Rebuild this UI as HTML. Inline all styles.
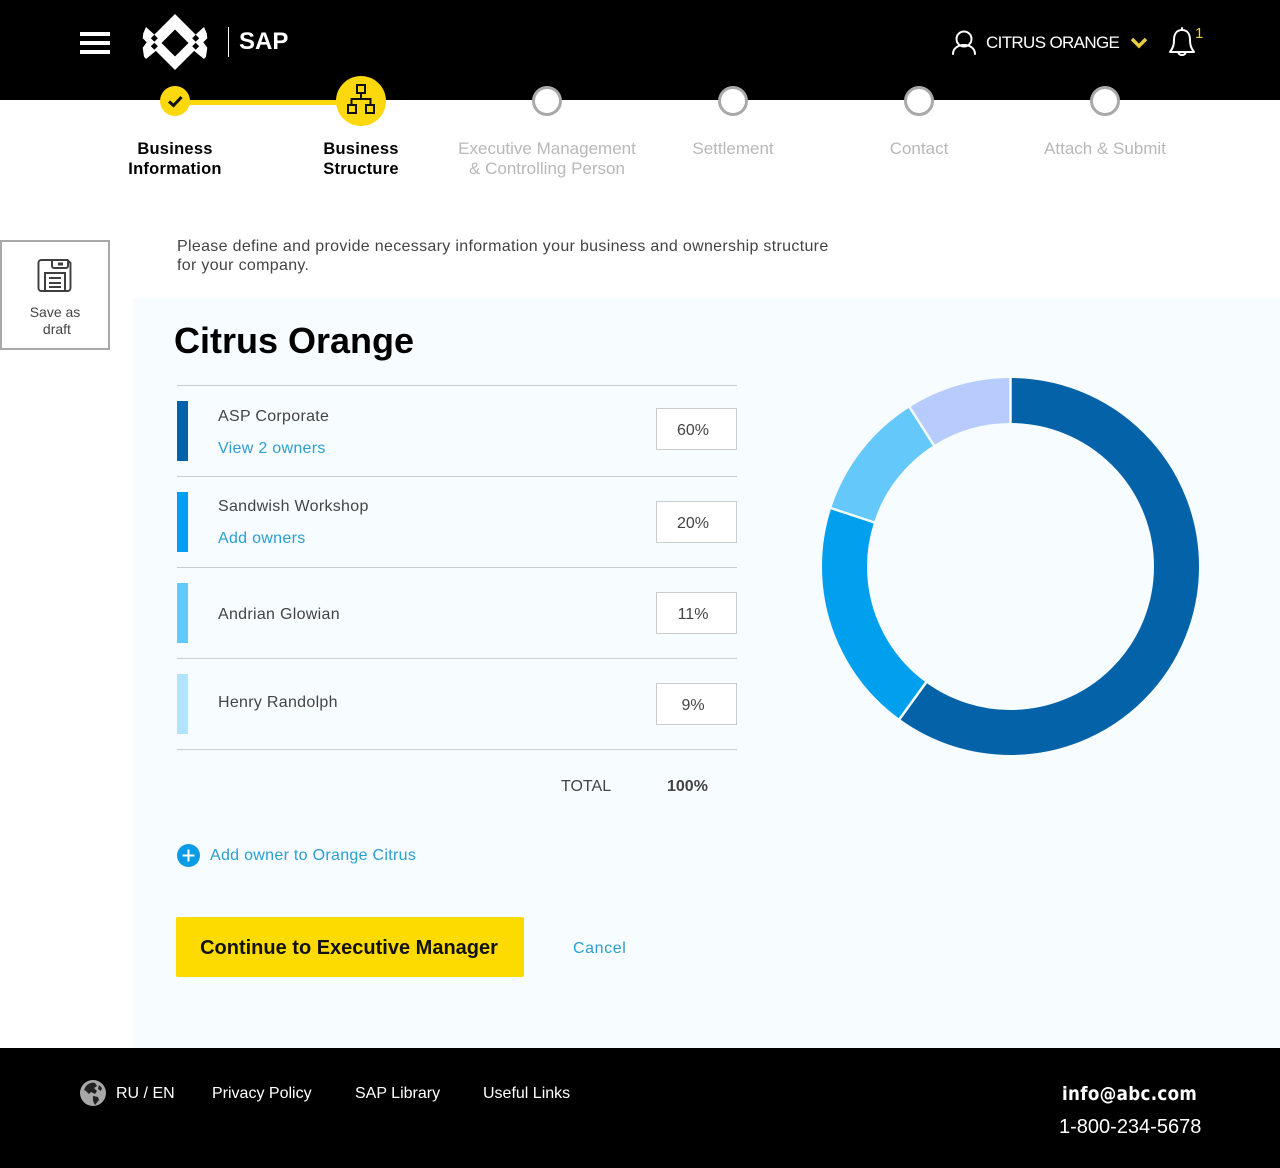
<!DOCTYPE html>
<html><head><meta charset="utf-8"><style>
html,body{margin:0;padding:0;background:#fff}
#p{position:relative;width:1280px;height:1168px;overflow:hidden;font-family:"Liberation Sans",sans-serif;background:#fff}
#p div,#p a,#p span.a{position:absolute;white-space:nowrap}
.c{text-align:center}
.ln{left:177px;width:560px;height:1px;background:#c9cdd0}
.bar{left:177px;width:11px;height:60px}
.nm{left:218px;font-size:16px;line-height:20px;color:#444;letter-spacing:.3px}
.lk{left:218px;font-size:16px;line-height:20px;color:#2a9fd0;letter-spacing:.3px}
.pc{left:656px;width:72px;height:40px;padding-right:7px;border:1px solid #c9cdd0;background:#fff;font-size:16px;line-height:44px;text-align:center;color:#444}
.st{font-size:17px;line-height:20px;text-align:center;width:200px;color:#b8b8b8;top:139px}
.sb{color:#000;font-weight:bold;font-size:16.5px;letter-spacing:.25px}
.dot{width:24px;height:24px;border:3px solid #a9a9a9;border-radius:50%;background:#fff;top:86px}
.f{top:1084px;font-size:16px;line-height:20px;color:#fff}
</style></head><body><div id="p">
<div style="left:0;top:0;width:1280px;height:100px;background:#000"></div>
<div style="left:80px;top:32px;width:30px;height:4px;background:#fff"></div>
<div style="left:80px;top:41px;width:30px;height:4px;background:#fff"></div>
<div style="left:80px;top:50px;width:30px;height:4px;background:#fff"></div>
<svg style="position:absolute;left:0;top:0" width="1280" height="100">
<polygon fill="#fff" points="175,14 203,42 175,70 147,42"/>
<polygon fill="#fff" points="146,27 157,37 157,50 146,59 144,56.700 142.700,47.700 146.700,42.300 142.700,38.300 143.300,33.300"/>
<polygon fill="#fff" points="204,27 193,37 193,50 204,59 206,56.700 207.300,47.700 203.300,42.300 207.300,38.300 206.700,33.300"/>
<polygon fill="#000" points="175,29.500 188.500,43 175,56.500 161.500,43"/>
<polygon fill="#000" points="154.300,34.800 157.800,38.300 154.300,41.800 150.800,38.300"/>
<polygon fill="#000" points="154.300,42.800 157.800,46.300 154.300,49.800 150.800,46.300"/>
<polygon fill="#000" points="195.700,34.800 199.200,38.300 195.700,41.800 192.200,38.300"/>
<polygon fill="#000" points="195.700,42.800 199.200,46.300 195.700,49.800 192.200,46.300"/>
<g fill="none" stroke="#fff" stroke-width="2" stroke-linecap="round" stroke-linejoin="round">
<circle cx="964" cy="39" r="7.500"/>
<path d="M953 54c0-12 22-12 22 0"/>
<path d="M1182 30c-6 0-8 5-8 10 0 5-1 8-4 12h24c-3-4-4-7-4-12 0-5-2-10-8-10z"/>
<path d="M1182 30v-2M1178 52c1 4 7 4 8 0"/>
</g>
<path d="M1132 39l7 7 7-7" fill="none" stroke="#e6ce40" stroke-width="3.500"/>
</svg>
<div style="left:228px;top:27px;width:1px;height:30px;background:#fff"></div>
<div style="left:239px;top:27px;font-size:24px;line-height:30px;font-weight:bold;color:#fff">SAP</div>
<div style="left:986px;top:33px;font-size:17px;line-height:20px;letter-spacing:-.65px;color:#fff">CITRUS ORANGE</div>
<div style="left:1195px;top:25px;font-size:15px;line-height:18px;color:#e6ce40">1</div>

<div style="left:175px;top:100px;width:186px;height:5px;background:#fcd80c"></div>
<div style="left:160px;top:86px;width:30px;height:30px;border-radius:50%;background:#fcd80c"></div>
<svg style="position:absolute;left:160px;top:86px" width="30" height="30"><path d="M9 15.500l4.500 4L21.500 11" fill="none" stroke="#111" stroke-width="3"/></svg>
<div style="left:336px;top:76px;width:50px;height:50px;border-radius:50%;background:#fcd80c"></div>
<svg style="position:absolute;left:336px;top:76px" width="50" height="50" fill="none" stroke="#111" stroke-width="2"><rect x="21" y="9" width="8" height="8"/><path d="M25 17v6M15.500 29v-6h19v6"/><rect x="12" y="29" width="8" height="8"/><rect x="30" y="29" width="8" height="8"/></svg>
<div class="dot" style="left:532px"></div>
<div class="dot" style="left:718px"></div>
<div class="dot" style="left:904px"></div>
<div class="dot" style="left:1090px"></div>

<div class="st sb" style="left:75px">Business<br>Information</div>
<div class="st sb" style="left:261px">Business<br>Structure</div>
<div class="st" style="left:447px">Executive Management<br>&amp; Controlling Person</div>
<div class="st" style="left:633px">Settlement</div>
<div class="st" style="left:819px">Contact</div>
<div class="st" style="left:1005px">Attach &amp; Submit</div>

<div style="left:0;top:240px;width:106px;height:106px;border:2px solid #a9a9a9;background:#fff"></div>
<svg style="position:absolute;left:37px;top:258px" width="36" height="36" fill="none" stroke="#3f3f3f" stroke-width="2"><path d="M4 2h27l3 3v25a3 3 0 0 1-3 3H4a3 3 0 0 1-3-3V5a3 3 0 0 1 3-3z" transform="translate(.5 0) scale(.97 1)"/><path d="M15 2v6a2 2 0 0 0 2 2h12a2 2 0 0 0 2-2V2"/><rect x="21" y="4.500" width="5" height="3" fill="#3f3f3f" stroke="none"/><rect x="8" y="15" width="20" height="18"/><path d="M12 20h12M12 25h12M12 29h12"/></svg>
<div class="c" style="left:0;width:110px;top:304px;font-size:14px;line-height:17px;color:#444">Save as<br>&nbsp;draft</div>

<div style="left:177px;top:236.500px;font-size:16px;line-height:19px;color:#444;letter-spacing:.32px">Please define and provide necessary information your business and ownership structure<br>for your company.</div>

<div style="left:133px;top:298px;width:1147px;height:750px;background:#f6fcff"></div>
<div style="left:174px;top:320px;font-size:36px;line-height:42px;font-weight:bold;color:#000">Citrus Orange</div>

<div class="ln" style="top:385px"></div>
<div class="bar" style="top:401px;background:#0463a8"></div>
<div class="nm" style="top:407px">ASP Corporate</div>
<div class="lk" style="top:439px">View 2 owners</div>
<div class="pc" style="top:408px">60%</div>
<div class="ln" style="top:476px"></div>
<div class="bar" style="top:492px;background:#00a0ef"></div>
<div class="nm" style="top:497px">Sandwish Workshop</div>
<div class="lk" style="top:529px">Add owners</div>
<div class="pc" style="top:501px">20%</div>
<div class="ln" style="top:567px"></div>
<div class="bar" style="top:583px;background:#64c8fb"></div>
<div class="nm" style="top:605px">Andrian Glowian</div>
<div class="pc" style="top:592px">11%</div>
<div class="ln" style="top:658px"></div>
<div class="bar" style="top:674px;background:#b2e5fd"></div>
<div class="nm" style="top:693px">Henry Randolph</div>
<div class="pc" style="top:683px">9%</div>
<div class="ln" style="top:749px"></div>
<div style="left:561px;top:777px;font-size:16px;line-height:20px;color:#444">TOTAL</div>
<div style="left:667px;top:777px;font-size:16px;line-height:20px;font-weight:bold;color:#444">100%</div>

<svg style="position:absolute;left:177px;top:844px" width="23" height="23"><circle cx="11.500" cy="11.500" r="11.500" fill="#0a9be4"/><path d="M5.500 11.500h12M11.500 5.500v12" stroke="#fff" stroke-width="2"/></svg>
<div class="lk" style="left:210px;top:846px">Add owner to Orange Citrus</div>

<div class="c" style="left:175px;top:918px;width:348px;height:60px;font-size:20px;line-height:60px;font-weight:bold;color:#111;z-index:2">Continue to Executive Manager</div>
<div style="left:176px;top:917px;width:348px;height:60px;background:#fedb00;border-radius:2px"></div>
<div style="left:573px;top:939px;font-size:16px;line-height:20px;color:#2a9fd0;letter-spacing:.6px">Cancel</div>

<svg style="position:absolute;left:0;top:0" width="1280" height="1168" fill="none">
<g stroke-width="45">
<circle cx="1010.500" cy="566.500" r="166" pathLength="100" stroke="#0463a8" stroke-dasharray="60 40" transform="rotate(-90 1010.500 566.500)"/>
<circle cx="1010.500" cy="566.500" r="166" pathLength="100" stroke="#00a0ef" stroke-dasharray="20 80" stroke-dashoffset="-60" transform="rotate(-90 1010.500 566.500)"/>
<circle cx="1010.500" cy="566.500" r="166" pathLength="100" stroke="#64c8fb" stroke-dasharray="11 89" stroke-dashoffset="-80" transform="rotate(-90 1010.500 566.500)"/>
<circle cx="1010.500" cy="566.500" r="166" pathLength="100" stroke="#b7ccfd" stroke-dasharray="9 91" stroke-dashoffset="-91" transform="rotate(-90 1010.500 566.500)"/>
</g>
<g stroke="#f6fcff" stroke-width="2.500">
<path d="M1010.500 376v50M898.500 720.500l29-40M829 507.500l47 15.500M908.500 405.500l26.500 41.500"/>
</g>
</svg>

<div style="left:0;top:1048px;width:1280px;height:120px;background:#000"></div>
<svg style="position:absolute;left:80px;top:1080px" width="26" height="26"><circle cx="13" cy="13" r="13" fill="#a8a8a8"/><path d="M6 6c3-3 6-4 9-3l2 3-3 2 3 3-2 3-4-2-2 2-3-3-2-1zM13 16l5 1 1 3-4 5-2-4z" fill="#222"/><path d="M19 5l3 3-1 3-3-2z" fill="#222"/></svg>
<div class="f" style="left:116px">RU / EN</div>
<div class="f" style="left:212px">Privacy Policy</div>
<div class="f" style="left:355px">SAP Library</div>
<div class="f" style="left:483px">Useful Links</div>
<div style="left:1062px;top:1082px;font-size:19px;line-height:24px;font-weight:bold;letter-spacing:.35px;color:#fff;font-family:'DejaVu Sans','Liberation Sans',sans-serif;transform-origin:0 50%;transform:scaleX(.88)">info@abc.com</div>
<div style="left:1059px;top:1115px;font-size:20px;line-height:24px;color:#fff">1-800-234-5678</div>
</div></body></html>
